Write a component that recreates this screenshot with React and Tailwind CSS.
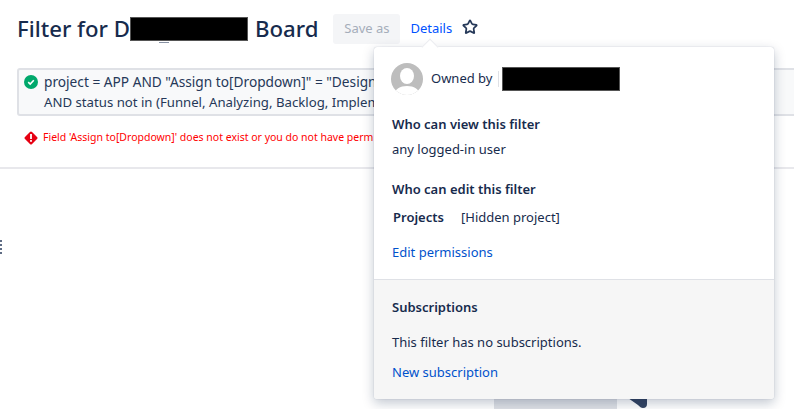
import { Star } from 'lucide-react';

const font = 'font-["Noto_Sans","Open_Sans",sans-serif]';

const Redacted = ({ className }) => (
  <span className={`inline-block bg-black border border-[#555] ${className}`} />
);

const Avatar = () => (
  <svg width="32" height="32" viewBox="0 0 32 32" className="shrink-0">
    <defs>
      <clipPath id="avatar-clip">
        <circle cx="16" cy="16" r="16" />
      </clipPath>
    </defs>
    <g clipPath="url(#avatar-clip)">
      <rect width="32" height="32" fill="#bdbdbd" />
      <ellipse cx="16" cy="13" rx="7" ry="8" fill="#fff" />
      <path d="M3 32c1-6 6-9 13-9s12 3 13 9z" fill="#fff" />
    </g>
  </svg>
);

const Popover = () => (
  <div className="absolute left-[374px] top-[47px] w-[400px] h-[352px] flex flex-col bg-white rounded-[3px] shadow-[0_4px_12px_rgba(9,30,66,0.25),0_0_1px_rgba(9,30,66,0.31)] text-[13px] text-[#172b4d]">
    <div className="absolute -top-[6px] left-[50px] w-[12px] h-[12px] rotate-45 bg-white border-l border-t border-[#ebecf0]" />
    <div className="flex flex-col pl-[18px] pr-[17px] h-[232px] relative">
      <div className="flex items-center mt-[16px] h-[32px] -ml-px">
        <Avatar />
        <span className="ml-[8px]">Owned by</span>
        <span className="ml-[6px] w-px h-[16px] bg-[#dfe1e6]" />
        <Redacted className="ml-[3px] w-[118px] h-[24px]" />
      </div>
      <div className="mt-[20px] font-semibold leading-[18px]">Who can view this filter</div>
      <div className="mt-[7px] leading-[18px]">any logged-in user</div>
      <div className="mt-[22px] font-semibold leading-[18px]">Who can edit this filter</div>
      <div className="flex mt-[10px] leading-[18px] pl-px">
        <span className="font-semibold w-[68px]">Projects</span>
        <span>[Hidden project]</span>
      </div>
      <a className="mt-[17px] leading-[18px] text-[#0052cc]">Edit permissions</a>
    </div>
    <div className="flex flex-col flex-1 pl-[18px] pr-[17px] bg-[#f6f6f6] border-t border-[#dfe1e6] rounded-b-[3px]">
      <div className="mt-[18px] font-semibold leading-[18px]">Subscriptions</div>
      <div className="mt-[17px] leading-[18px]">This filter has no subscriptions.</div>
      <a className="mt-[12px] leading-[18px] text-[#0052cc]">New subscription</a>
    </div>
  </div>
);

export default function App() {
  return (
    <div className={`relative w-[794px] h-[409px] overflow-hidden bg-white ${font}`}>
      {/* Page header */}
      <div className="flex items-center pl-[17px] pt-[13px] h-[45px]">
        <h1 className="flex items-center text-[22.2px] font-medium leading-[32px] text-[#172b4d]">
          Filter for D
          <span className="relative flex">
            <Redacted className="w-[118px] h-[24px]" />
            <span className="absolute left-[29px] top-[25px] w-[10px] h-px bg-[#8993a4]" />
          </span>
          <span className="ml-[7px]">Board</span>
        </h1>
        <button className="ml-[15px] h-[30px] w-[67px] rounded-[3px] bg-[#f4f5f7] text-[13px] text-[#a5adba]">Save as</button>
        <a className="ml-[10px] text-[13px] text-[#0052ff]">Details</a>
        <Star size={16} strokeWidth={2.6} className="ml-[10px] -mt-[4px] text-[#253858]" />
      </div>

      {/* JQL box */}
      <div className="ml-[17px] mt-[23px] w-[800px] h-[48px] flex border-2 border-[#dfe1e6] rounded-[3px] bg-[#f8f9fa] leading-[20px] text-[#253858]">
        <svg width="14" height="14" viewBox="0 0 14 14" className="ml-[5px] mt-[5px] shrink-0">
          <circle cx="7" cy="7" r="7" fill="#00a86b" />
          <path d="M4.2 7.2l2 1.9 3.6-3.8" fill="none" stroke="#fff" strokeWidth="1.6" />
        </svg>
        <div className="ml-[6px] pt-[2px] whitespace-nowrap">
          <div className="text-[13.7px]">project = APP AND "Assign to[Dropdown]" = "Design</div>
          <div className="text-[13.2px]">AND status not in (Funnel, Analyzing, Backlog, Implem</div>
        </div>
      </div>

      {/* Validation error */}
      <div className="flex items-center ml-[24px] mt-[13px] h-[18px] text-[10.5px] text-[#ff0000] whitespace-nowrap">
        <svg width="14" height="14" viewBox="0 0 14 14" className="shrink-0">
          <rect x="2" y="2" width="10" height="10" rx="1.5" transform="rotate(45 7 7)" fill="#e60012" />
          <rect x="6.1" y="3" width="1.8" height="5" fill="#fff" />
          <rect x="6.1" y="9" width="1.8" height="1.8" fill="#fff" />
        </svg>
        <span className="ml-[5px]">Field 'Assign to[Dropdown]' does not exist or you do not have perm</span>
      </div>

      <div className="mt-[20px] h-[2px] bg-[#e8e8ec]" />

      {/* Board area behind the popover */}
      <div className="flex items-start">
        <div className="mt-[71px] flex flex-col gap-[2px] w-[2px]">
          <span className="h-[2px] bg-[#5e6c84]" />
          <span className="h-[2px] bg-[#5e6c84]" />
          <span className="h-[2px] bg-[#5e6c84]" />
          <span className="h-[2px] bg-[#5e6c84]" />
        </div>
        <div className="ml-[492px] mt-[225px] w-[123px] h-[20px] bg-[#dfe1e6]" />
        <svg width="19" height="12" viewBox="0 0 19 12" className="ml-[11px] mt-[229px] shrink-0">
          <path d="M0 0H19V6a4 4 0 0 1-4 4c-2 0-3-1-5-3z" fill="#344563" />
        </svg>
      </div>

      <Popover />
    </div>
  );
}
